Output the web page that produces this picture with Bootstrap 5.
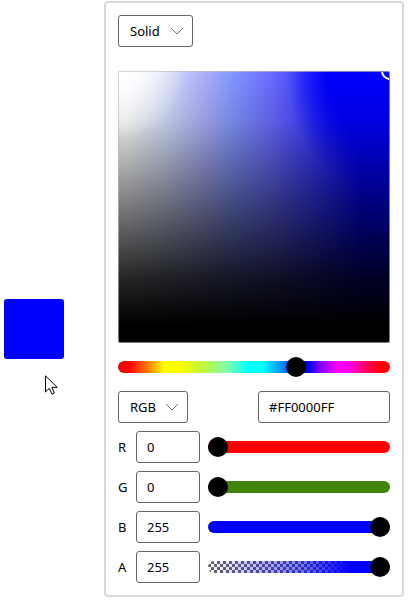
<!DOCTYPE html>
<html lang="en">
<head>
<meta charset="utf-8">
<meta name="viewport" content="width=device-width, initial-scale=1">
<title>Color picker</title>
<link href="https://cdn.jsdelivr.net/npm/bootstrap@5.3.0/dist/css/bootstrap.min.css" rel="stylesheet">
<style>
body { background: #fff; color: #000; font: 13px/20px "Noto Sans", "Open Sans", sans-serif; }
.swatch-holder { flex: 0 0 60px; margin: 58px 40px 0 4px; }
.swatch { display: block; width: 100%; height: 60px; border: 0; border-radius: 3px; background: #00f; }
.pointer { left: 41px; top: 76px; }
.picker { min-width: 0; margin: 1px 4px 3px 0; padding: 12px; border: 2px solid #dadada; border-radius: 4px; }
.form-select.field, .form-control.field {
  height: 32px; border: 1px solid #666; border-radius: 3px; padding: 5px 10px;
  color: #000; font-size: 13px; line-height: 20px; background-color: #fff;
}
.form-select.field {
  padding-left: 11px;
  background-image: url("data:image/svg+xml,%3Csvg xmlns='http://www.w3.org/2000/svg' viewBox='0 0 14 8'%3E%3Cpath d='M1 1l6 6 6-6' fill='none' stroke='%23777'/%3E%3C/svg%3E");
  background-position: right 8px center; background-size: 14px 8px;
}
.brush { width: 75px; }
.model { width: 70px; }
.hex { width: 132px; }
.model-row { margin-top: 14px; }
.channel { width: 64px; flex: none; }
.channel-name { width: 18px; flex: none; }
.spectrum {
  aspect-ratio: 1; margin: 24px 0 14px; border: 1px solid rgba(190, 190, 190, .65); border-radius: 2px;
  background: radial-gradient(circle at 0 0, #fff, rgba(255, 255, 255, 0) 18%) border-box,
    linear-gradient(to bottom, transparent, rgba(0, 0, 0, .11) 18%, rgba(0, 0, 0, .47) 46%, rgba(0, 0, 0, .85) 76%, #000 93%) border-box,
    radial-gradient(ellipse 38% 45% at 100% 0, #00f 60%, rgba(0, 0, 255, 0)) border-box,
    linear-gradient(to right, #fff 3%, #d5e0fa 17%, #a9acfa 33%, #8297ff 42%, #6969ff 57%, #4a4cff 66%, #00f 90%) border-box;
}
.spectrum-thumb { right: -10px; top: -10px; width: 18px; height: 18px; border: 2px solid #fff; }
.track { --track: #00f; appearance: none; display: block; min-width: 0; height: 20px; margin: 0; background: transparent; }
.track::-webkit-slider-runnable-track { height: 12px; border-radius: 6px; background: var(--track); }
.track::-webkit-slider-thumb { appearance: none; width: 20px; height: 20px; margin-top: -4px; border: 0; border-radius: 50%; background: #000; }
.track::-moz-range-track { height: 12px; border-radius: 6px; background: var(--track); }
.track::-moz-range-thumb { width: 20px; height: 20px; border: 0; border-radius: 50%; background: #000; }
.track-hue { --track: linear-gradient(to right, red 4%, #ff6a00 10%, #ff0 17%, #ff0 22%, #c0f53c 31%, #7fffb0 40%, cyan 48%, cyan 53%, #0a80ff 61%, #00f 67%, #00f 70%, #8000ff 74%, #f0f 81%, #f0f 84%, #ff0060 91%, red 97%); }
.track-red { --track: #f00; }
.track-green { --track: #40840a; }
.track-alpha { --track: linear-gradient(to right, transparent, rgba(0, 0, 255, .5) 50%, #00f 78%), repeating-conic-gradient(#666 0 25%, #fff 0 50%) 0 0 / 6px 6px; }
</style>
<script src="https://cdn.jsdelivr.net/npm/bootstrap@5.3.0/dist/js/bootstrap.bundle.min.js"></script>
</head>
<body>
<main class="d-flex align-items-center">
  <div class="swatch-holder position-relative">
    <button type="button" class="swatch" aria-label="Selected color"></button>
    <svg class="pointer position-absolute" width="14" height="21" viewBox="0 0 14 21" aria-hidden="true">
      <path d="M.5 .8V17l3.8-3.7 2.6 5.8 2.5-1.1-2.5-5.6h5.3z" fill="#fff" stroke="#000"/>
    </svg>
  </div>
  <form class="picker flex-grow-1">
    <select class="form-select field brush" aria-label="Brush type"><option>Solid</option><option>Linear</option></select>
    <div class="spectrum position-relative overflow-hidden">
      <span class="spectrum-thumb position-absolute rounded-circle"></span>
    </div>
    <input type="range" class="track track-hue w-100" min="0" max="360" value="240" aria-label="Hue">
    <div class="model-row d-flex justify-content-between">
      <select class="form-select field model" aria-label="Color model"><option>RGB</option><option>HSV</option></select>
      <input type="text" class="form-control field hex" value="#FF0000FF" aria-label="Hex value">
    </div>
    <div class="d-flex align-items-center mt-2">
      <label class="channel-name" for="red">R</label>
      <input type="text" class="form-control field channel me-2" id="red" value="0">
      <input type="range" class="track track-red flex-grow-1" max="255" value="0" aria-label="Red">
    </div>
    <div class="d-flex align-items-center mt-2">
      <label class="channel-name" for="green">G</label>
      <input type="text" class="form-control field channel me-2" id="green" value="0">
      <input type="range" class="track track-green flex-grow-1" max="255" value="0" aria-label="Green">
    </div>
    <div class="d-flex align-items-center mt-2">
      <label class="channel-name" for="blue">B</label>
      <input type="text" class="form-control field channel me-2" id="blue" value="255">
      <input type="range" class="track flex-grow-1" max="255" value="255" aria-label="Blue">
    </div>
    <div class="d-flex align-items-center mt-2">
      <label class="channel-name" for="alpha">A</label>
      <input type="text" class="form-control field channel me-2" id="alpha" value="255">
      <input type="range" class="track track-alpha flex-grow-1" max="255" value="255" aria-label="Alpha">
    </div>
  </form>
</main>
</body>
</html>
